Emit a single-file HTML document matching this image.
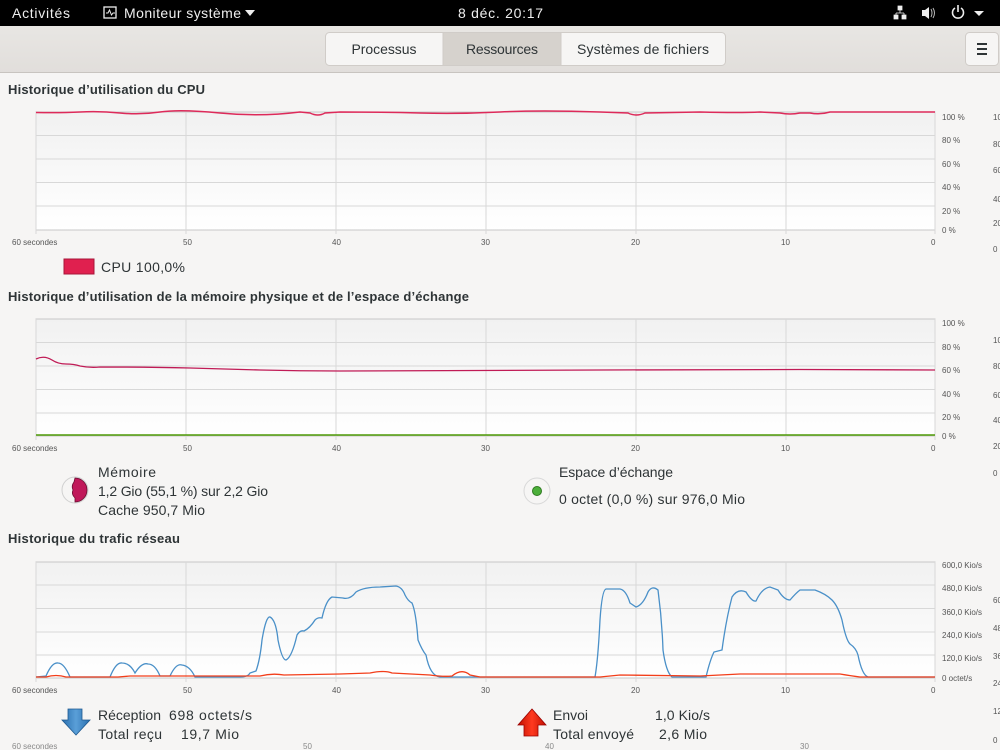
<!DOCTYPE html>
<html><head><meta charset="utf-8"><style>
*{margin:0;padding:0;box-sizing:border-box}
body{width:1000px;height:750px;overflow:hidden;background:#f6f5f4;font-family:"Liberation Sans",sans-serif;position:relative}
svg{position:absolute;left:0;top:0}
</style></head><body>
<svg width="1000" height="750" viewBox="0 0 1000 750" font-family="Liberation Sans, sans-serif">
<defs>
<linearGradient id="pg" x1="0" y1="0" x2="0" y2="1"><stop offset="0" stop-color="#f1f1f1"/><stop offset="1" stop-color="#ffffff"/></linearGradient>
<linearGradient id="hb" x1="0" y1="0" x2="0" y2="1"><stop offset="0" stop-color="#e8e6e3"/><stop offset="1" stop-color="#e1dedb"/></linearGradient>
<linearGradient id="ba" x1="0" y1="0" x2="1" y2="0"><stop offset="0" stop-color="#2a6fae"/><stop offset="0.5" stop-color="#5a9fd8"/><stop offset="1" stop-color="#2a6fae"/></linearGradient>
<linearGradient id="ra" x1="0" y1="0" x2="1" y2="0"><stop offset="0" stop-color="#c01000"/><stop offset="0.5" stop-color="#ff3a20"/><stop offset="1" stop-color="#c01000"/></linearGradient>
</defs>
<!-- top bar -->
<rect x="0" y="0" width="1000" height="26" fill="#000"/>
<text x="12" y="18" fill="#eee" font-size="14" textLength="58">Activités</text>
<rect x="104" y="7" width="12" height="11" fill="none" stroke="#eee" stroke-width="1.3"/>
<path d="M106 13h2l1.5-3 2 5 1.5-2h2" fill="none" stroke="#eee" stroke-width="1"/>
<text x="124" y="18" fill="#eee" font-size="14" textLength="117">Moniteur système</text>
<path d="M245 10h10l-5 6z" fill="#eee"/>
<text x="458" y="18" fill="#eee" font-size="14" textLength="85">8 déc.  20:17</text>
<path d="M898 6h4v4h-4zM900 10v3M896 13h8M896 13v2M904 13v2M894 15h4v4h-4zM902 15h4v4h-4z" fill="#eee" stroke="#eee" stroke-width="0.8"/>
<path d="M922 10h3l4-3v12l-4-3h-3z" fill="#eee"/><path d="M931 9q2 4 0 8M933 8q3 5 0 10" fill="none" stroke="#bbb" stroke-width="1"/>
<path d="M955 8a5.5 5.5 0 1 0 6 0" fill="none" stroke="#eee" stroke-width="1.6"/><path d="M958 5v7" stroke="#eee" stroke-width="1.6"/>
<path d="M974 11h10l-5 5z" fill="#eee"/>
<!-- header bar -->
<rect x="0" y="26" width="1000" height="47" fill="url(#hb)"/>
<rect x="0" y="72" width="1000" height="1" fill="#c8c4c0"/>
<rect x="325.5" y="32.5" width="400" height="33" rx="4" fill="#f6f5f4" stroke="#d0ccc8"/>
<rect x="443" y="33" width="118" height="32" fill="#d6d2cd"/>
<line x1="443" y1="33" x2="443" y2="65" stroke="#d0ccc8"/><line x1="561" y1="33" x2="561" y2="65" stroke="#d0ccc8"/>
<text x="384" y="54" text-anchor="middle" fill="#2e3436" font-size="14" textLength="65">Processus</text>
<text x="502" y="54" text-anchor="middle" fill="#2e3436" font-size="14" textLength="72">Ressources</text>
<text x="643" y="54" text-anchor="middle" fill="#2e3436" font-size="14" textLength="132">Systèmes de fichiers</text>
<rect x="965.5" y="32.5" width="33" height="33" rx="4" fill="#f6f5f4" stroke="#d0ccc8"/>
<path d="M977 44h10M977 49h10M977 54h10" stroke="#2e3436" stroke-width="2"/>

<g fill="#2e3436" font-weight="bold" font-size="13">
<text x="8" y="94" textLength="197">Historique d’utilisation du CPU</text>
<text x="8" y="301" textLength="461">Historique d’utilisation de la mémoire physique et de l’espace d’échange</text>
<text x="8" y="543" textLength="172">Historique du trafic réseau</text>
</g>

<!-- charts -->
<g id="grid" stroke="#d8d8d8" stroke-width="1">
<rect x="36" y="112" width="899" height="118" fill="url(#pg)" stroke="#c8c8c8"/>
<path d="M36 135.5H935M36 159H935M36 182.5H935M36 206H935M186 112V234M336 112V234M486 112V234M636 112V234M786 112V234M935 112V234M36 112V234"/>
<rect x="36" y="319" width="899" height="117" fill="url(#pg)" stroke="#c8c8c8"/>
<path d="M36 342.5H935M36 366H935M36 389.5H935M36 413H935M186 319V440M336 319V440M486 319V440M636 319V440M786 319V440M935 319V440M36 319V440"/>
<rect x="36" y="562" width="899" height="116" fill="url(#pg)" stroke="#c8c8c8"/>
<path d="M36 585H935M36 608.5H935M36 632H935M36 655H935M186 562V682M336 562V682M486 562V682M636 562V682M786 562V682M935 562V682M36 562V682"/>
</g>
<g fill="#555" font-size="8">
<text x="12" y="245">60 secondes</text><text x="183" y="245">50</text><text x="332" y="245">40</text><text x="481" y="245">30</text><text x="631" y="245">20</text><text x="781" y="245">10</text><text x="931" y="245">0</text>
<text x="942" y="120">100 %</text><text x="942" y="143">80 %</text><text x="942" y="167">60 %</text><text x="942" y="190">40 %</text><text x="942" y="214">20 %</text><text x="942" y="233">0 %</text>
<text x="993" y="120">100</text><text x="993" y="147">80</text><text x="993" y="173">60</text><text x="993" y="202">40</text><text x="993" y="226">20</text><text x="993" y="252">0</text>
<text x="12" y="451">60 secondes</text><text x="183" y="451">50</text><text x="332" y="451">40</text><text x="481" y="451">30</text><text x="631" y="451">20</text><text x="781" y="451">10</text><text x="931" y="451">0</text>
<text x="942" y="326">100 %</text><text x="942" y="350">80 %</text><text x="942" y="373">60 %</text><text x="942" y="397">40 %</text><text x="942" y="420">20 %</text><text x="942" y="439">0 %</text>
<text x="993" y="343">100</text><text x="993" y="369">80</text><text x="993" y="398">60</text><text x="993" y="423">40</text><text x="993" y="449">20</text><text x="993" y="476">0</text>
<text x="12" y="693">60 secondes</text><text x="183" y="693">50</text><text x="332" y="693">40</text><text x="481" y="693">30</text><text x="631" y="693">20</text><text x="781" y="693">10</text><text x="931" y="693">0</text>
<text x="942" y="568">600,0 Kio/s</text><text x="942" y="591">480,0 Kio/s</text><text x="942" y="615">360,0 Kio/s</text><text x="942" y="638">240,0 Kio/s</text><text x="942" y="661">120,0 Kio/s</text><text x="942" y="681">0 octet/s</text>
<text x="993" y="603">60</text><text x="993" y="631">48</text><text x="993" y="659">36</text><text x="993" y="686">24</text><text x="993" y="714">12</text><text x="993" y="743">0</text>
</g>
<g fill="#888" font-size="8"><text x="12" y="749">60 secondes</text><text x="303" y="749">50</text><text x="545" y="749">40</text><text x="800" y="749">30</text><text x="1040" y="749">20</text></g>

<!-- CPU line -->
<path d="M36 112.5 Q60 113 80 112 T120 113 T160 112 T220 113 T300 112 L310 113 Q318 117 325 113 L340 112 Q380 112 420 113 T500 112 T600 112 L628 113 Q636 117 645 113 L700 112 Q740 113 760 112 L780 113 Q790 115 800 113 L810 113 Q820 115 830 112 L935 112" fill="none" stroke="#dd2a5a" stroke-width="1.5"/>
<!-- memory -->
<path d="M36 359 Q44 355 52 360 Q58 364 66 364 Q74 364 80 366 Q90 368 100 367 Q150 367 190 368 Q230 369 260 370 Q300 371 340 371 Q500 370 600 370 Q750 370 800 369.5 Q870 370 935 370" fill="none" stroke="#c01b56" stroke-width="1.3"/>
<path d="M36 435H935" stroke="#4e9a06" stroke-width="1.5"/>
<!-- network -->
<path d="M36 677 L46 676 Q52 662 58 663 Q64 663 70 677 L110 677 Q116 662 122 663 Q130 663 135 673 Q142 662 148 664 Q155 664 160 676 L170 676 Q176 663 182 665 Q190 666 195 677 L240 677 Q248 677 250 673 L256 671 Q260 660 262 640 Q266 616 270 617 Q276 620 278 640 Q282 660 286 660 Q292 657 297 635 Q300 630 304 631 Q310 628 315 620 Q318 617 322 618 Q326 600 332 597 L343 598 Q350 600 356 592 Q364 587 380 587 L396 586 Q402 587 405 595 Q408 601 412 603 Q416 612 418 640 Q422 650 426 655 Q430 676 440 677 L595 677 Q598 660 600 620 Q602 590 606 589 L620 589 Q626 590 630 603 L636 607 Q643 605 648 592 Q652 585 658 590 Q662 620 663 650 Q666 672 672 677 L706 677 Q710 660 714 652 L722 650 Q726 620 732 597 Q738 588 746 592 Q752 602 756 601 Q762 588 770 587 L778 590 Q784 600 790 600 Q796 593 800 590 L815 590 Q826 594 832 600 Q838 606 842 620 Q846 640 850 644 Q856 648 858 655 Q862 675 868 677 L935 677" fill="none" stroke="#4a90c8" stroke-width="1.3"/>
<path d="M36 677 L46 677 Q56 674 66 677 L110 677 L118 677 L130 676 L200 676 L260 676 Q272 673 284 675 L340 674 L370 673 Q385 670 392 673 L430 675 Q444 677 452 676 Q462 668 470 675 L480 677 L600 677 L620 675 L700 676 L740 674 L840 674 Q852 676 860 677 L935 677" fill="none" stroke="#f23e1a" stroke-width="1.3"/>

<!-- CPU legend -->
<rect x="64" y="259" width="30" height="15" fill="#e0204f" stroke="#a8163a"/>
<text x="101" y="272" fill="#2e3436" font-size="14" textLength="84">CPU 100,0%</text>

<!-- memory legend -->
<circle cx="75" cy="490" r="13" fill="#f6f5f4" stroke="#d0d0d0"/>
<path d="M75 478 A12 12 0 0 1 75 502 L75 498 Q71 494 73 490 Q71 486 74 482 Z" fill="#c0195a" stroke="#6a0c30" stroke-width="0.8"/>
<g fill="#2e3436" font-size="14">
<text x="98" y="477" textLength="58">Mémoire</text>
<text x="98" y="496" textLength="170">1,2 Gio (55,1 %) sur 2,2 Gio</text>
<text x="98" y="515" textLength="107">Cache 950,7 Mio</text>
<text x="559" y="477" textLength="114">Espace d’échange</text>
<text x="559" y="504" textLength="186">0 octet (0,0 %) sur 976,0 Mio</text>
</g>
<circle cx="537" cy="491" r="13" fill="#f6f5f4" stroke="#d8d8d8"/>
<circle cx="537" cy="491" r="4.5" fill="#4caf3a" stroke="#2f7a20"/>

<!-- network legend -->
<path d="M68 709h14v11h8l-14 15-14-15h6z" fill="url(#ba)" stroke="#1f5a90" stroke-width="0.8"/>
<path d="M524 736h14v-11h8l-14-16-14 16h6z" fill="url(#ra)" stroke="#900" stroke-width="0.8"/>
<g fill="#2e3436" font-size="14">
<text x="98" y="720" textLength="63">Réception</text>
<text x="169" y="720" textLength="83">698 octets/s</text>
<text x="98" y="739" textLength="64">Total reçu</text>
<text x="181" y="739" textLength="58">19,7 Mio</text>
<text x="553" y="720" textLength="35">Envoi</text>
<text x="655" y="720" textLength="55">1,0 Kio/s</text>
<text x="553" y="739" textLength="81">Total envoyé</text>
<text x="659" y="739" textLength="48">2,6 Mio</text>
</g>
</svg>
</body></html>
